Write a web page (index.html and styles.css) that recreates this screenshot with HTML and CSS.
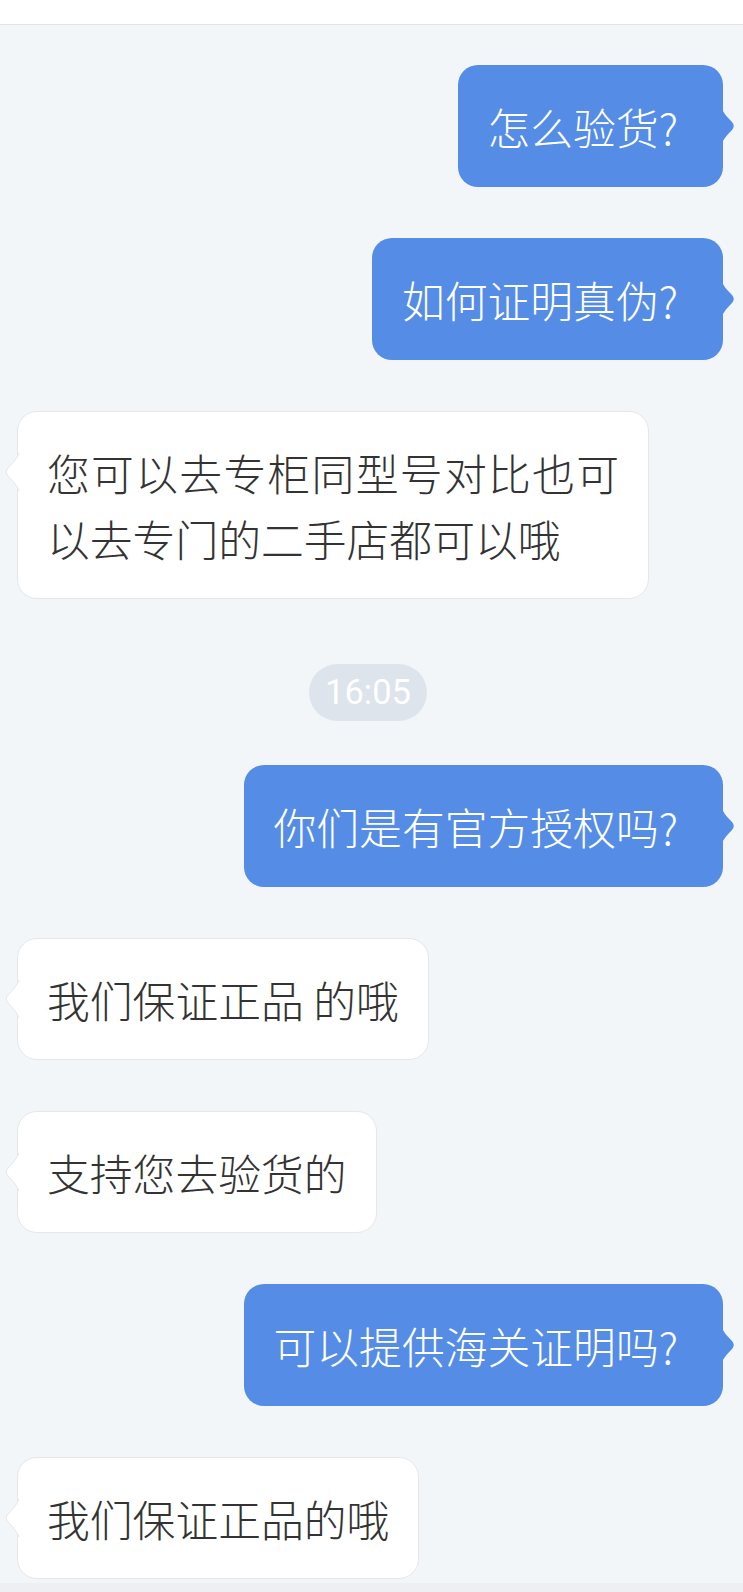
FILE: index.html
```html
<!DOCTYPE html>
<html lang="zh-CN">
<head>
<meta charset="utf-8">
<title>Chat</title>
<link rel="stylesheet" href="styles.css">
</head>
<body>
<div class="topbar"></div>
<main class="chat">
  <div class="msg mine"><span class="text">怎么验货?</span><svg class="tail tail-right" width="16" height="38" viewBox="0 0 16 38"><path d="M0 0 C2 5 5 9 11 15 Q14.5 19 11 23 C5 29 2 33 0 38 Z"/></svg></div>
  <div class="msg mine"><span class="text">如何证明真伪?</span><svg class="tail tail-right" width="16" height="38" viewBox="0 0 16 38"><path d="M0 0 C2 5 5 9 11 15 Q14.5 19 11 23 C5 29 2 33 0 38 Z"/></svg></div>
  <div class="msg theirs"><span class="text">您可以去专柜同型号对比也可以去专门的二手店都可以哦</span><svg class="tail tail-left" width="17" height="40" viewBox="0 0 17 40"><path class="fill" d="M17 1 L16 1 C14 6 11 10 5 16 Q1.5 20 5 24 C11 30 14 34 16 39 L17 39 Z"/><path class="edge" d="M16 1 C14 6 11 10 5 16 Q1.5 20 5 24 C11 30 14 34 16 39"/></svg></div>
  <div class="time">16:05</div>
  <div class="msg mine"><span class="text">你们是有官方授权吗?</span><svg class="tail tail-right" width="16" height="38" viewBox="0 0 16 38"><path d="M0 0 C2 5 5 9 11 15 Q14.5 19 11 23 C5 29 2 33 0 38 Z"/></svg></div>
  <div class="msg theirs"><span class="text">我们保证正品 的哦</span><svg class="tail tail-left" width="17" height="40" viewBox="0 0 17 40"><path class="fill" d="M17 1 L16 1 C14 6 11 10 5 16 Q1.5 20 5 24 C11 30 14 34 16 39 L17 39 Z"/><path class="edge" d="M16 1 C14 6 11 10 5 16 Q1.5 20 5 24 C11 30 14 34 16 39"/></svg></div>
  <div class="msg theirs"><span class="text">支持您去验货的</span><svg class="tail tail-left" width="17" height="40" viewBox="0 0 17 40"><path class="fill" d="M17 1 L16 1 C14 6 11 10 5 16 Q1.5 20 5 24 C11 30 14 34 16 39 L17 39 Z"/><path class="edge" d="M16 1 C14 6 11 10 5 16 Q1.5 20 5 24 C11 30 14 34 16 39"/></svg></div>
  <div class="msg mine"><span class="text">可以提供海关证明吗?</span><svg class="tail tail-right" width="16" height="38" viewBox="0 0 16 38"><path d="M0 0 C2 5 5 9 11 15 Q14.5 19 11 23 C5 29 2 33 0 38 Z"/></svg></div>
  <div class="msg theirs"><span class="text">我们保证正品的哦</span><svg class="tail tail-left" width="17" height="40" viewBox="0 0 17 40"><path class="fill" d="M17 1 L16 1 C14 6 11 10 5 16 Q1.5 20 5 24 C11 30 14 34 16 39 L17 39 Z"/><path class="edge" d="M16 1 C14 6 11 10 5 16 Q1.5 20 5 24 C11 30 14 34 16 39"/></svg></div>
</main>
<div class="bottombar"></div>
</body>
</html>
```

FILE: styles.css
```css
* { box-sizing: border-box; }
html, body {
  margin: 0;
  padding: 0;
}
body {
  width: 743px;
  height: 1592px;
  overflow: hidden;
  background: #f3f6f9;
  font-family: "Noto Sans CJK SC", "Noto Sans", sans-serif;
  display: flex;
  flex-direction: column;
}
.topbar {
  height: 25px;
  flex: none;
  background: #ffffff;
  border-bottom: 1px solid #e2e3e5;
}
.chat {
  flex: 1;
  display: flex;
  flex-direction: column;
  padding: 40px 20px 0 17px;
}
.msg {
  position: relative;
  max-width: 632px;
  padding: 28px 30px;
  border-radius: 20px;
  font-size: 42.8px;
  font-weight: 300;
  line-height: 66px;
  text-align: justify;
  margin-top: 51px;
}
.msg:first-child { margin-top: 0; }
.mine {
  align-self: flex-end;
  background: #548ce6;
  color: #ffffff;
  padding-right: 45px;
}
.theirs {
  align-self: flex-start;
  background: #ffffff;
  color: #333333;
  border: 1px solid #e6e7e9;
  padding: 27px 29px;
}
.tail {
  position: absolute;
  top: 42px;
  display: block;
}
.tail-right {
  right: -14px;
}
.tail-right path { fill: #548ce6; }
.tail-left {
  left: -15px;
  top: 40px;
}
.tail-left .fill { fill: #ffffff; }
.tail-left .edge { fill: none; stroke: #e6e7e9; stroke-width: 1; }
.time {
  align-self: center;
  margin-top: 65px;
  height: 57px;
  line-height: 57px;
  padding: 0 16px;
  border-radius: 29px;
  background: #dde4ec;
  color: #ffffff;
  font-family: Roboto, "Noto Sans", sans-serif;
  font-size: 34.5px;
  transform: translateX(-2px);
}
.time + .msg { margin-top: 44px; }
.bottombar {
  height: 9px;
  flex: none;
  background: #eeeff2;
}
```
